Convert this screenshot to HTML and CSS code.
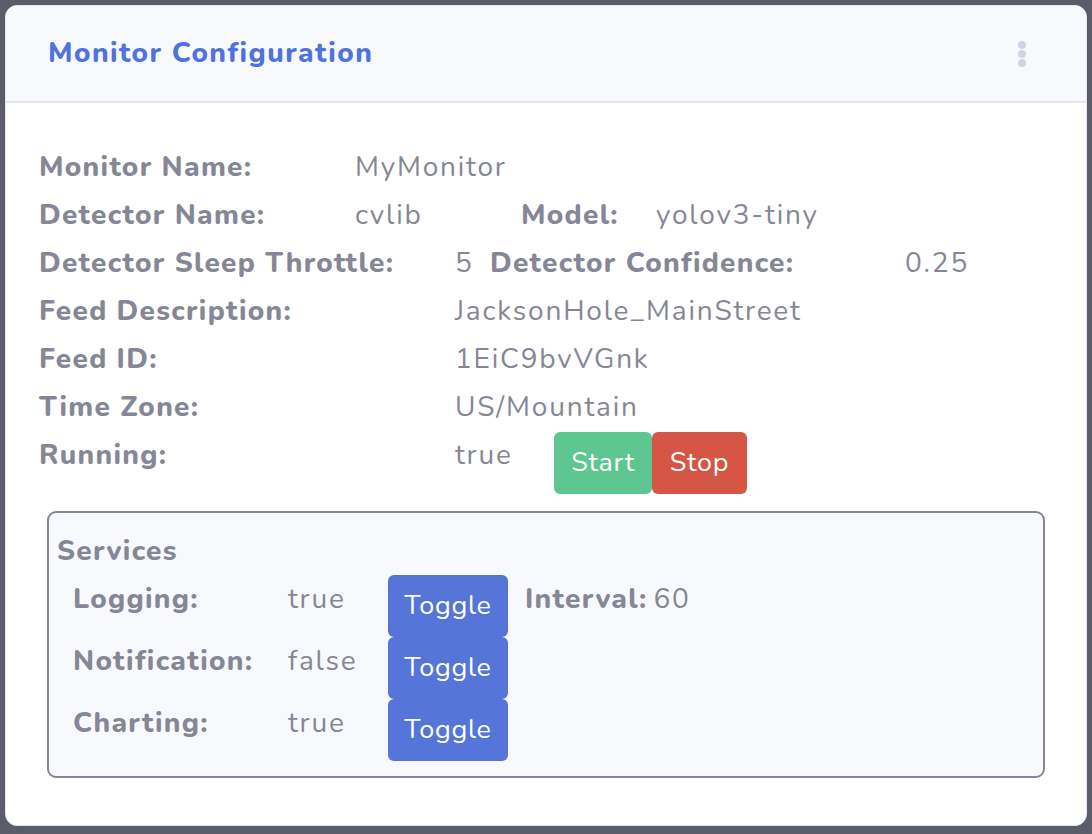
FILE: index.html
```html
<!DOCTYPE html>
<html>
<head>
<meta charset="utf-8">
<link rel="stylesheet" href="styles.css">
</head>
<body>
<div class="card">
  <div class="card-header">
    <h1 class="title">Monitor Configuration</h1>
    <div class="menu" aria-label="menu">
      <svg width="10" height="30" viewBox="0 0 10 30"><circle cx="5" cy="5" r="4" fill="#d1d3e2"/><circle cx="5" cy="14" r="4" fill="#d1d3e2"/><circle cx="5" cy="23" r="4" fill="#d1d3e2"/></svg>
    </div>
  </div>
  <div class="card-body">
    <div class="row">
      <span class="lbl w316">Monitor Name:</span>
      <span class="val">MyMonitor</span>
    </div>
    <div class="row">
      <span class="lbl w316">Detector Name:</span>
      <span class="val w166">cvlib</span>
      <span class="lbl w135">Model:</span>
      <span class="val">yolov3-tiny</span>
    </div>
    <div class="row">
      <span class="lbl w416">Detector Sleep Throttle:</span>
      <span class="val w35">5</span>
      <span class="lbl w415">Detector Confidence:</span>
      <span class="val">0.25</span>
    </div>
    <div class="row">
      <span class="lbl w416">Feed Description:</span>
      <span class="val">JacksonHole_MainStreet</span>
    </div>
    <div class="row">
      <span class="lbl w416">Feed ID:</span>
      <span class="val">1EiC9bvVGnk</span>
    </div>
    <div class="row">
      <span class="lbl w416">Time Zone:</span>
      <span class="val">US/Mountain</span>
    </div>
    <div class="row run-row">
      <span class="lbl w416">Running:</span>
      <span class="val w99">true</span>
      <button class="btn btn-start">Start</button><button class="btn btn-stop">Stop</button>
    </div>

    <div class="services">
      <div class="services-title">Services</div>
      <div class="srow">
        <span class="lbl w215">Logging:</span>
        <span class="val w100">true</span>
        <button class="btn btn-toggle">Toggle</button>
        <span class="lbl interval">Interval:</span>
        <span class="val">60</span>
      </div>
      <div class="srow">
        <span class="lbl w215">Notification:</span>
        <span class="val w100">false</span>
        <button class="btn btn-toggle">Toggle</button>
      </div>
      <div class="srow">
        <span class="lbl w215">Charting:</span>
        <span class="val w100">true</span>
        <button class="btn btn-toggle">Toggle</button>
      </div>
    </div>
  </div>
</div>
</body>
</html>
```

FILE: styles.css
```css
html, body {
  margin: 0;
  padding: 0;
}
body {
  background: #5a5c69;
  padding: 5px;
  height: 834px;
  box-sizing: border-box;
  font-family: "Nunito", "Lato", sans-serif;
  font-size: 28px;
  color: #858796;
}
.card {
  background: #fff;
  border: 1px solid #e3e6f0;
  border-radius: 12px;
  height: 821px;
  box-sizing: border-box;
  overflow: hidden;
}
.card-header {
  background: #f8f9fc;
  border-bottom: 2px solid #e3e6f0;
  height: 97px;
  box-sizing: border-box;
  display: flex;
  align-items: center;
  justify-content: space-between;
  padding: 0 59px 0 42px;
}
.title {
  margin: 0;
  font-size: 28px;
  font-weight: 800;
  letter-spacing: 1.45px;
  color: #4e73df;
  padding-bottom: 2px;
}
.menu {
  display: flex;
  align-items: center;
  padding-top: 2px;
}
.card-body {
  padding: 40px 0 0 33px;
}
.row {
  display: flex;
  align-items: flex-start;
  height: 48px;
  line-height: 48px;
  white-space: nowrap;
}
.run-row {
  height: 64px;
}
.lbl {
  font-weight: 800;
  letter-spacing: 1.3px;
  display: inline-block;
}
.val {
  font-weight: 400;
  letter-spacing: 1.8px;
  display: inline-block;
}
.w316 { width: 316px; }
.w166 { width: 166px; }
.w135 { width: 135px; }
.w416 { width: 416px; }
.w35 { width: 35px; }
.w415 { width: 415px; }
.w99 { width: 99px; }
.w215 { width: 215px; }
.w100 { width: 100px; }

.btn {
  border: none;
  font-family: inherit;
  font-size: 27px;
  letter-spacing: 0.7px;
  color: #fff;
  height: 62px;
  line-height: 62px;
  padding: 0;
  border-radius: 6px;
  margin-top: 1px;
  cursor: pointer;
}
.btn-start {
  background: #5ec690;
  width: 98px;
}
.btn-stop {
  background: #d55645;
  width: 95px;
}
.btn-toggle {
  background: #5575d8;
  width: 120px;
  margin-top: 0;
}

.services {
  margin: 16px 0 0 8px;
  width: 998px;
  height: 267px;
  box-sizing: border-box;
  border: 2px solid #858796;
  border-radius: 9px;
  background: #f8f9fc;
  padding: 14px 8px 14px 8px;
}
.services-title {
  font-weight: 800;
  letter-spacing: 1.3px;
  line-height: 48px;
  height: 48px;
}
.srow {
  display: flex;
  align-items: flex-start;
  height: 62px;
  line-height: 48px;
  padding-left: 16px;
  white-space: nowrap;
}
.interval {
  margin-left: 17px;
  margin-right: 6px;
}
```
